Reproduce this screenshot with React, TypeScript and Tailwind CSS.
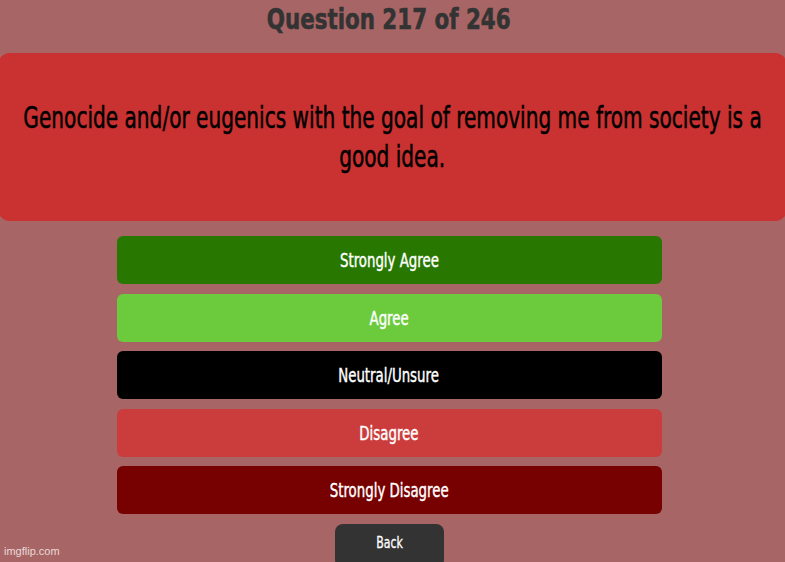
import React from "react";

const options = [
  { label: "Strongly Agree", color: "bg-[#277700]" },
  { label: "Agree", color: "bg-[#6ccb3d]" },
  { label: "Neutral/Unsure", color: "bg-black" },
  { label: "Disagree", color: "bg-[#cb3d3d]" },
  { label: "Strongly Disagree", color: "bg-[#770000]" },
];

// Teko-style narrow lettering, approximated by squeezing DejaVu Sans Condensed
function Narrow({ children, className = "" }: { children: React.ReactNode; className?: string }) {
  return <span className={`inline-block whitespace-nowrap ${className}`}>{children}</span>;
}

export default function App() {
  return (
    <div className="relative w-[785px] h-[562px] overflow-hidden bg-[#a86565] pr-[7px] font-['DejaVu_Sans_Condensed','DejaVu_Sans',sans-serif] font-stretch-condensed">
      <h1 className="h-[38px] pt-[1px] flex justify-center text-[29px] leading-[36px] font-bold text-[#333333]">
        <Narrow className="scale-x-[0.82] [-webkit-text-stroke:0.6px_#333333]">Question 217 of 246</Narrow>
      </h1>

      <div className="mt-[15px] ml-[-2px] mr-[-9px] h-[168px] rounded-[12px] bg-[#ca3131] flex flex-col items-center justify-center text-[30px] leading-[39px] text-black [-webkit-text-stroke:0.5px_black]">
        <Narrow className="scale-x-[0.745]">
          Genocide and/or eugenics with the goal of removing me from society is a
        </Narrow>
        <Narrow className="scale-x-[0.745]">good idea.</Narrow>
      </div>

      <div className="mt-[15px] flex flex-col items-center gap-[9.5px]">
        {options.map((o) => (
          <button
            key={o.label}
            className={`w-[545px] h-[48px] rounded-[6px] ${o.color} text-white text-[19px] leading-[48px] [-webkit-text-stroke:0.4px_white]`}
          >
            <Narrow className="scale-x-[0.78]">{o.label}</Narrow>
          </button>
        ))}
        <button className="mt-[0.5px] w-[109px] h-[44px] rounded-[8px] bg-[#333333] text-white text-[16px] pb-[6px] [-webkit-text-stroke:0.3px_white]">
          <Narrow className="scale-x-[0.76]">Back</Narrow>
        </button>
      </div>

      <span className="absolute left-[4px] bottom-[3px] text-[11px] text-[#e8dada] font-['Liberation_Sans',sans-serif] font-stretch-normal">
        imgflip.com
      </span>
    </div>
  );
}
